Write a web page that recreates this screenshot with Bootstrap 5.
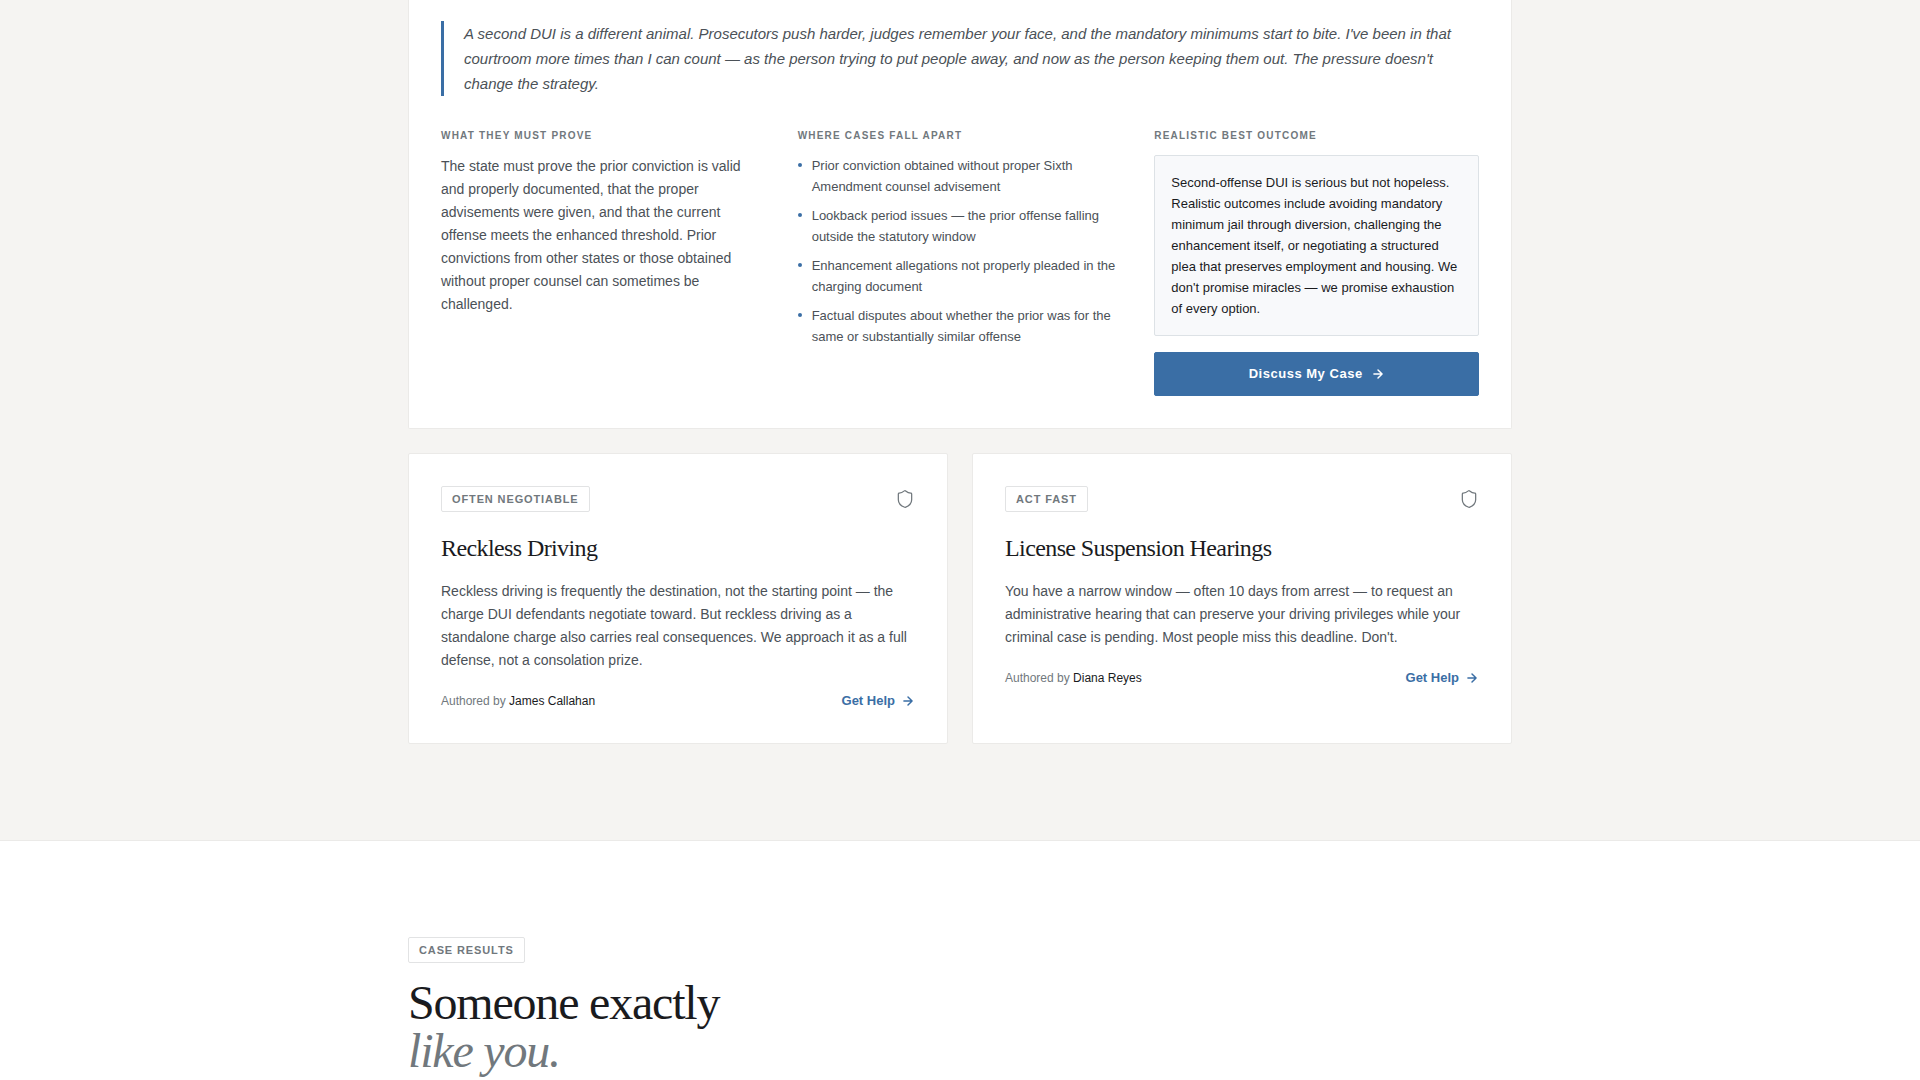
<!DOCTYPE html>
<html lang="en">
<head>
<meta charset="utf-8">
<meta name="viewport" content="width=device-width, initial-scale=1">
<title>DUI Defense</title>
<link href="https://cdn.jsdelivr.net/npm/bootstrap@5.3.0/dist/css/bootstrap.min.css" rel="stylesheet">
<style>
  :root {
    --ink: #1a1b1e;
    --body: #4b5157;
    --muted: #71787d;
    --accent: #3a6ea5;
    --line: #ebeae8;
    --paper: #f5f4f2;
  }
  body { font-family: "Liberation Sans", Arial, sans-serif; color: var(--body); background: #fff; font-size: 14px; line-height: 23px; }
  .wrap { max-width: 1200px; padding-left: 48px; padding-right: 48px; }
  .charges { background: var(--paper); border-bottom: 1px solid var(--line); padding-bottom: 96px; }
  .results { padding-top: 96px; }
  .panel { background: #fff; border: 1px solid var(--line); border-radius: 2px; padding: 32px; }
  .panel-open { border-top: 0; border-radius: 0 0 2px 2px; padding-top: 21px; }
  .quote { border-left: 3px solid var(--accent); padding-left: 20px; margin-bottom: 32px; font-size: 15px; line-height: 25px; font-style: italic; }
  .columns { --bs-gutter-x: 32px; --bs-gutter-y: 32px; }
  .label { font-size: 10px; line-height: 16px; font-weight: 700; letter-spacing: 1.2px; text-transform: uppercase; color: var(--muted); margin-bottom: 11px; }
  .points { font-size: 13px; line-height: 21px; }
  .points li { display: flex; gap: 10px; }
  .points li::before { content: ""; flex: none; width: 4px; height: 4px; margin-top: 8px; border-radius: 50%; background: var(--accent); }
  .outcome { background: #f8f9fb; border: 1px solid #dde2e6; border-radius: 2px; padding: 16px; font-size: 13px; line-height: 21px; color: var(--ink); }
  .cta { --bs-btn-bg: var(--accent); --bs-btn-border-color: var(--accent); --bs-btn-hover-bg: #315e8e; --bs-btn-hover-border-color: #315e8e; --bs-btn-color: #fff; --bs-btn-hover-color: #fff; --bs-btn-border-radius: 2px; --bs-btn-padding-y: 11px; --bs-btn-font-size: 13px; --bs-btn-line-height: 20px; --bs-btn-font-weight: 700; letter-spacing: .52px; }
  .tag { display: inline-block; font-size: 11px; line-height: 16px; font-weight: 700; letter-spacing: .88px; text-transform: uppercase; color: var(--muted); border: 1px solid #e2e3e4; border-radius: 2px; padding: 4px 10px; background: #fff; }
  .serif { font-family: "Liberation Serif", "Times New Roman", serif; font-weight: 400; color: var(--ink); margin: 0; }
  .card-top { margin-bottom: 20px; }
  .title { font-size: 24px; line-height: 32px; letter-spacing: -.6px; }
  .summary { margin-bottom: 19px; }
  .headline { font-size: 48px; line-height: 48px; letter-spacing: -1.2px; }
  .headline em { color: var(--muted); }
  .shield { color: var(--muted); }
  .byline { font-size: 12px; line-height: 20px; color: var(--muted); }
  .byline span { color: var(--ink); }
  .help { gap: 6px; font-size: 13px; line-height: 20px; font-weight: 700; color: var(--accent); text-decoration: none; }
</style>
</head>
<body class="min-vh-100">
<svg class="d-none" aria-hidden="true">
  <symbol id="arrow" viewBox="0 0 24 24"><path d="M5 12h14M12 5l7 7-7 7" fill="none" stroke="currentColor" stroke-width="2.5" stroke-linecap="round" stroke-linejoin="round"/></symbol>
  <symbol id="shield" viewBox="0 0 24 24"><path d="M20 13c0 5-3.500 7.500-7.660 8.950a1 1 0 0 1-.670-.010C7.500 20.500 4 18 4 13V6a1 1 0 0 1 1-1c2 0 4.500-1.200 6.240-2.720a1.170 1.170 0 0 1 1.520 0C14.510 3.810 17 5 19 5a1 1 0 0 1 1 1z" fill="none" stroke="currentColor" stroke-width="1.500" stroke-linecap="round" stroke-linejoin="round"/></symbol>
</svg>

<section class="charges">
  <div class="container-fluid wrap">
    <article class="panel panel-open mb-4">
      <blockquote class="quote">A second DUI is a different animal. Prosecutors push harder, judges remember your face, and the mandatory minimums start to bite. I've been in that courtroom more times than I can count — as the person trying to put people away, and now as the person keeping them out. The pressure doesn't change the strategy.</blockquote>
      <div class="row columns">
        <div class="col-lg-4">
          <h4 class="label">What they must prove</h4>
          <p class="mb-0">The state must prove the prior conviction is valid and properly documented, that the proper advisements were given, and that the current offense meets the enhanced threshold. Prior convictions from other states or those obtained without proper counsel can sometimes be challenged.</p>
        </div>
        <div class="col-lg-4">
          <h4 class="label">Where cases fall apart</h4>
          <ul class="points list-unstyled d-grid gap-2 mb-0">
            <li>Prior conviction obtained without proper Sixth Amendment counsel advisement</li>
            <li>Lookback period issues — the prior offense falling outside the statutory window</li>
            <li>Enhancement allegations not properly pleaded in the charging document</li>
            <li>Factual disputes about whether the prior was for the same or substantially similar offense</li>
          </ul>
        </div>
        <div class="col-lg-4">
          <h4 class="label">Realistic best outcome</h4>
          <p class="outcome mb-3">Second-offense DUI is serious but not hopeless. Realistic outcomes include avoiding mandatory minimum jail through diversion, challenging the enhancement itself, or negotiating a structured plea that preserves employment and housing. We don't promise miracles — we promise exhaustion of every option.</p>
          <button type="button" class="btn cta w-100 d-flex align-items-center justify-content-center gap-2">Discuss My Case <svg width="14" height="14" aria-hidden="true"><use href="#arrow"/></svg></button>
        </div>
      </div>
    </article>

    <div class="row gx-4 gy-4">
      <div class="col-md-6">
        <article class="panel h-100">
          <div class="card-top d-flex align-items-center justify-content-between">
            <span class="tag">Often negotiable</span>
            <svg class="shield" width="20" height="20" aria-hidden="true"><use href="#shield"/></svg>
          </div>
          <h3 class="serif title mb-3">Reckless Driving</h3>
          <p class="summary">Reckless driving is frequently the destination, not the starting point — the charge DUI defendants negotiate toward. But reckless driving as a standalone charge also carries real consequences. We approach it as a full defense, not a consolation prize.</p>
          <div class="d-flex align-items-center justify-content-between">
            <div class="byline">Authored by <span>James Callahan</span></div>
            <a href="#" class="help d-flex align-items-center">Get Help <svg width="14" height="14" aria-hidden="true"><use href="#arrow"/></svg></a>
          </div>
        </article>
      </div>
      <div class="col-md-6">
        <article class="panel h-100">
          <div class="card-top d-flex align-items-center justify-content-between">
            <span class="tag">Act fast</span>
            <svg class="shield" width="20" height="20" aria-hidden="true"><use href="#shield"/></svg>
          </div>
          <h3 class="serif title mb-3">License Suspension Hearings</h3>
          <p class="summary">You have a narrow window — often 10 days from arrest — to request an administrative hearing that can preserve your driving privileges while your criminal case is pending. Most people miss this deadline. Don't.</p>
          <div class="d-flex align-items-center justify-content-between">
            <div class="byline">Authored by <span>Diana Reyes</span></div>
            <a href="#" class="help d-flex align-items-center">Get Help <svg width="14" height="14" aria-hidden="true"><use href="#arrow"/></svg></a>
          </div>
        </article>
      </div>
    </div>
  </div>
</section>

<section class="results">
  <div class="container-fluid wrap">
    <div class="d-flex mb-3"><span class="tag">Case results</span></div>
    <h2 class="serif headline">Someone exactly<br><em>like you.</em></h2>
  </div>
</section>
<script src="https://cdn.jsdelivr.net/npm/bootstrap@5.3.0/dist/js/bootstrap.bundle.min.js"></script>
</body>
</html>
